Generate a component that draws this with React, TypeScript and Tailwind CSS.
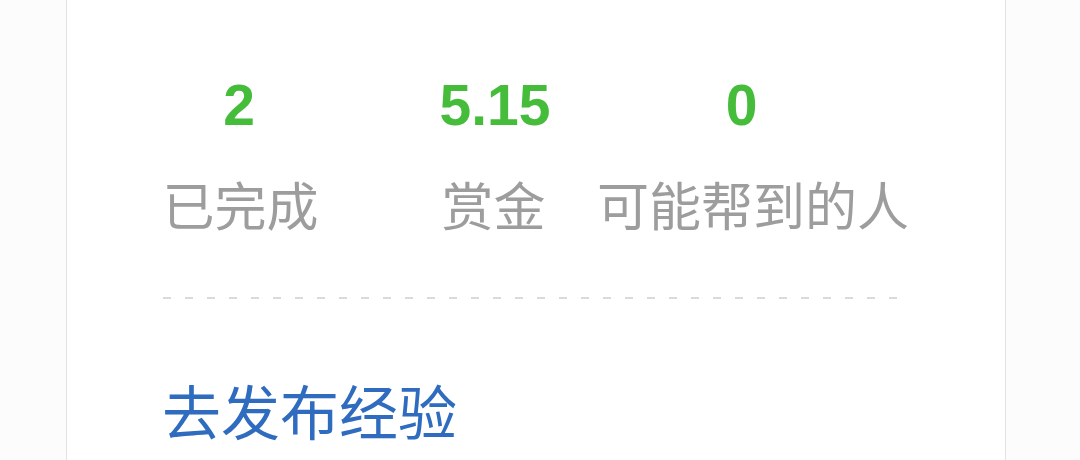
import React from "react";

const stats = [
  { value: "2", label: "已完成", valueCls: "-ml-[3px]", labelCls: "" },
  { value: "5.15", label: "赏金", valueCls: "ml-[3px]", labelCls: "" },
  { value: "0", label: "可能帮到的人", valueCls: "-ml-[10px]", labelCls: "ml-[13px]" },
];

const App = () => {
  return (
    <div className="w-[1080px] h-[460px] overflow-hidden bg-[#fcfcfc] font-['Liberation_Sans','Noto_Sans_CJK_SC',sans-serif]">
      <div className="ml-[66px] w-[940px] h-full border-x border-[#e2e2e2] bg-white pt-[77px]">
        <div className="flex pl-[47px]">
          {stats.map((s) => (
            <div key={s.label} className="w-[253px] flex flex-col items-center">
              <span className={`text-[57px] leading-none font-bold text-[#45bd3b] ${s.valueCls}`}>{s.value}</span>
              <span className={`mt-[48px] text-[52px] leading-none whitespace-nowrap text-[#9d9d9d] ${s.labelCls}`}>
                {s.label}
              </span>
            </div>
          ))}
        </div>

        <div className="ml-[96px] mt-[63px] w-[737px] h-[2px] bg-[repeating-linear-gradient(to_right,#dadada_0_8px,transparent_8px_22px)]" />

        <a className="block ml-[95px] mt-[87px] text-[59px] leading-none text-[#2f6cc0] whitespace-nowrap">
          去发布经验
        </a>
      </div>
    </div>
  );
};

export default App;
